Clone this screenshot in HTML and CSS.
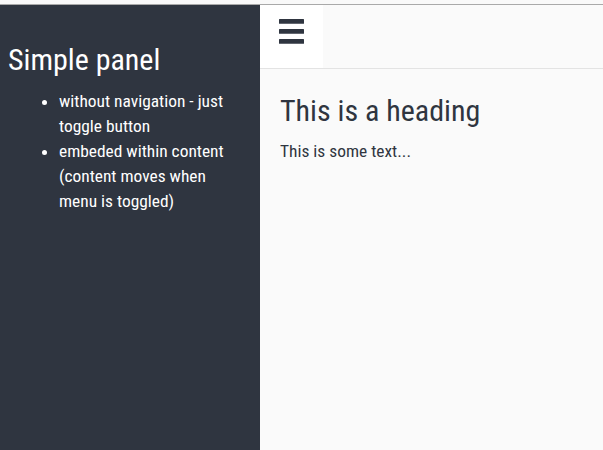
FILE: index.html
```html
<!DOCTYPE html>
<html>
<head>
  <meta charset="UTF-8">
  <title>Simple panel</title>
  <link rel="stylesheet" href="styles.css">
</head>
<body>
  <div class="topline"></div>
  <div class="layout">
    <!-- Side panel -->
    <div class="panel">
      <h2>Simple panel</h2>
      <ul>
        <li>without navigation - just toggle button</li>
        <li>embeded within content (content moves when menu is toggled)</li>
      </ul>
    </div>

    <!-- Main content -->
    <div class="main">
      <div class="header">
        <button class="toggle" type="button">
          <svg width="25" height="25" viewBox="0 0 25 25">
            <rect x="0" y="0" width="25" height="4.7" rx="0.5" />
            <rect x="0" y="10" width="25" height="4.7" rx="0.5" />
            <rect x="0" y="20" width="25" height="4.7" rx="0.5" />
          </svg>
        </button>
      </div>
      <div class="content">
        <h1>This is a heading</h1>
        <p>This is some text...</p>
      </div>
    </div>
  </div>
</body>
</html>
```

FILE: styles.css
```css
body {
  font-family: "Roboto Condensed", Roboto, "Liberation Sans Narrow", sans-serif;
  font-stretch: 87.5%;
  font-size: 17.4px;
  background: #fafafa;
  color: #2f3540;
  margin: 0;
  padding: 0;
}
.topline {
  height: 4px;
  background: #f9f9f9;
  border-bottom: 1px solid #a9a9a9;
}
.layout {
  display: flex;
  height: calc(100vh - 5px);
}
.panel {
  width: 260px;
  flex-shrink: 0;
  background: #2f3540;
  color: #fff;
  padding: 0 20px 0 8px;
  box-sizing: border-box;
}
.panel h2 {
  font-size: 30px;
  font-weight: normal;
  line-height: 36px;
  margin: 37px 0 11px;
}
.panel ul {
  margin: 0;
  padding-left: 51px;
  line-height: 25px;
}
.main {
  flex: 1;
  background: #fafafa;
}
.header {
  height: 63px;
  border-bottom: 1px solid #e3e3e3;
  display: flex;
}
.toggle {
  width: 63px;
  height: 63px;
  background: #fff;
  border: none;
  padding: 14px 0 0;
  display: flex;
  justify-content: center;
  align-items: flex-start;
  cursor: pointer;
}
.toggle svg {
  fill: #2f3540;
}
.content {
  padding: 0 20px;
}
.content h1 {
  font-size: 30px;
  font-weight: normal;
  line-height: 36px;
  margin: 24px 0 10px;
}
.content p {
  line-height: 25px;
  margin: 0;
}
```
